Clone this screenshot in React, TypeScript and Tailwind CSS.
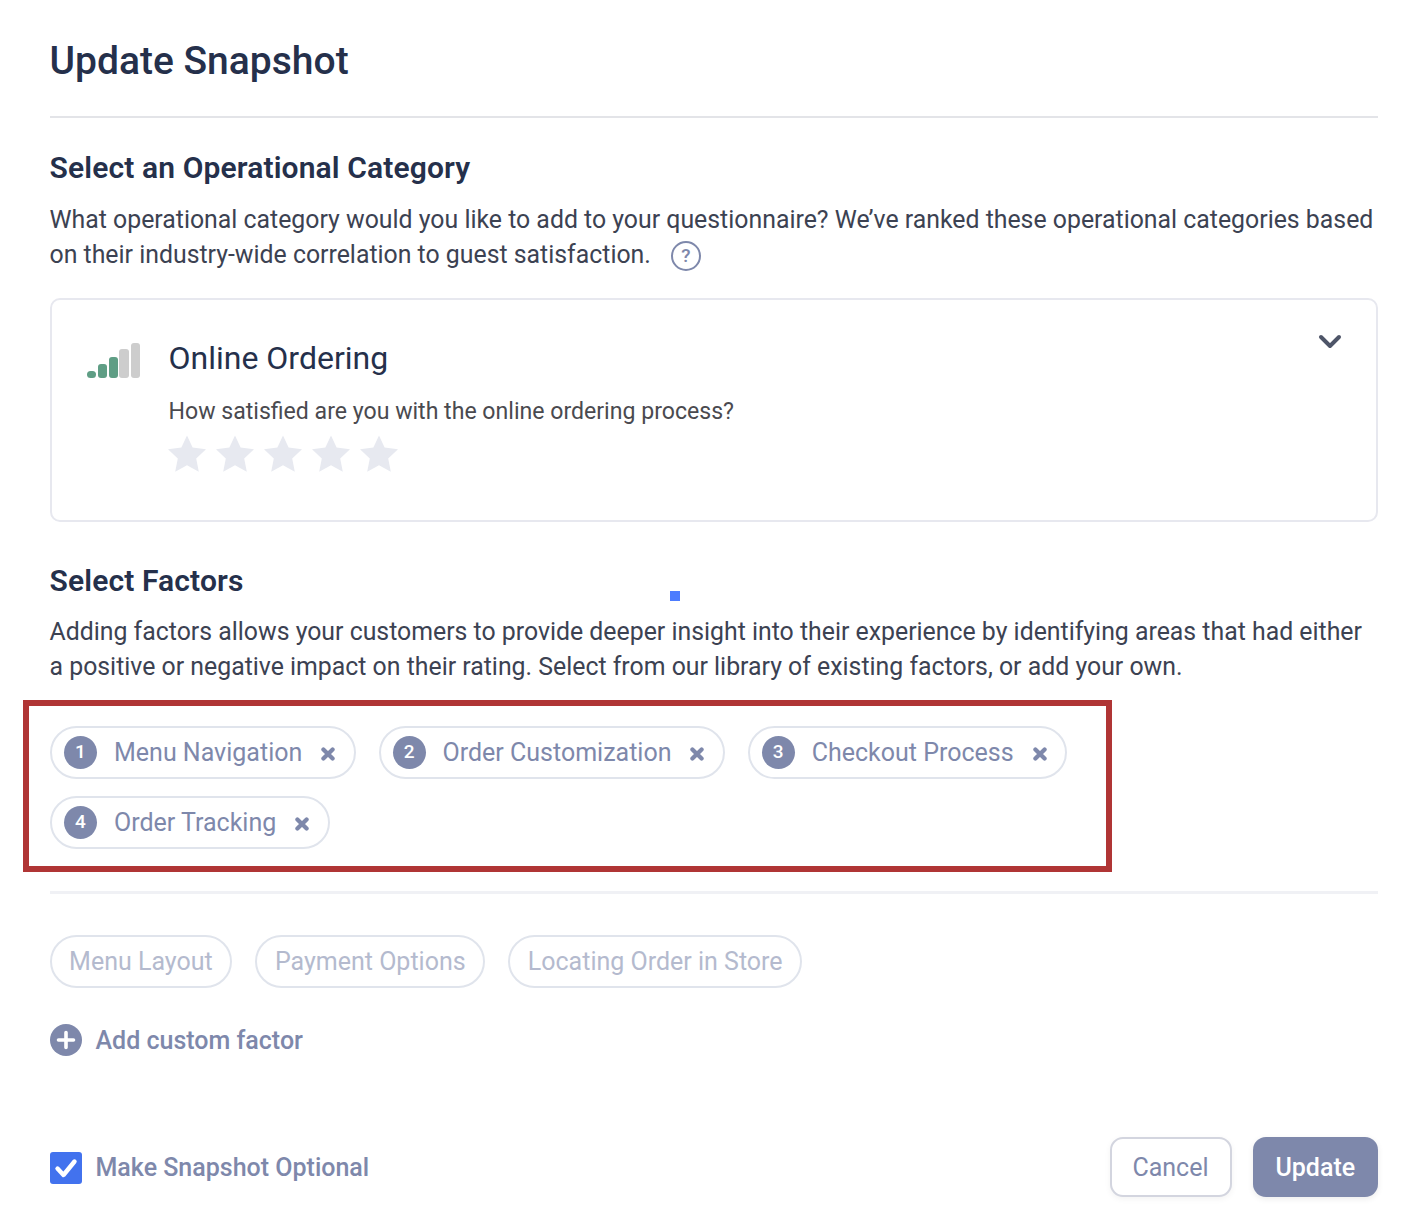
const font = "[font-family:Roboto,'Liberation_Sans',sans-serif]";

function Star() {
  return (
    <svg width="40" height="38" viewBox="0 0 40 38" className="mr-[8px] shrink-0">
      <path d="M20 0.5 L25.6 12.6 L39 14.3 L29.2 23.4 L31.8 36.8 L20 30.2 L8.2 36.8 L10.8 23.4 L1 14.3 L14.4 12.6 Z" fill="#e7e9f0" />
    </svg>
  );
}

function XIcon() {
  return (
    <svg width="14" height="14" viewBox="0 0 14 14" className="mt-[3px] shrink-0">
      <path d="M2.4 2.4 L11.6 11.6 M11.6 2.4 L2.4 11.6" stroke="#7e88ab" strokeWidth="4.2" strokeLinecap="round" />
    </svg>
  );
}

function Chip({ n, label }: { n: number; label: string }) {
  return (
    <div className="flex h-[53px] items-center rounded-full border-2 border-[#e0e4ec] pl-[12px] pr-[18.25px]">
      <span className="flex h-[33px] w-[33px] items-center justify-center rounded-full bg-[#7e88ab] text-[19px] font-medium text-white">{n}</span>
      <span className="ml-[17px] pt-[2px] text-[25px] text-[#7e88ab]">{label}</span>
      <span className="ml-[19px] flex"><XIcon /></span>
    </div>
  );
}

function Option({ label }: { label: string }) {
  return (
    <div className="flex h-[53px] items-center rounded-full border-2 border-[#e0e4ec] px-[17.6px] pt-[2px] text-[25px] text-[#b4bace]">{label}</div>
  );
}

export default function App() {
  return (
    <div className={`${font} relative h-[1228px] w-[1424px] overflow-hidden bg-white pl-[49.5px] pr-[46px] pt-[36px] antialiased`}>
      <h1 className="text-[39px] font-medium leading-[50px] text-[#25304b]">Update Snapshot</h1>
      <div className="mt-[30px] h-[2px] bg-[#e3e4e8]" />

      <h2 className="mt-[32px] text-[30px] font-semibold leading-[36px] tracking-[0.13px] text-[#25304b]">Select an Operational Category</h2>
      <p className="mt-[16px] text-[24.85px] leading-[35px] text-[#3c4252]">
        What operational category would you like to add to your questionnaire? We’ve ranked these operational categories based on their industry-wide correlation to guest satisfaction.
        <span className="ml-[20px] inline-flex h-[30px] w-[30px] -translate-y-[1px] items-center justify-center rounded-full border-2 border-[#7e88ab] text-[19px] font-medium leading-none text-[#7e88ab]">?</span>
      </p>

      <div className="mt-[26px] flex h-[224px] rounded-[10px] border-2 border-[#e7e8ef] pl-[34px] pr-[34px] pt-[28px]">
        <svg width="54" height="36" viewBox="0 0 54 36" className="mt-[15px] shrink-0">
          <rect x="1" y="28" width="9" height="7" rx="3.5" fill="#5f9e85" />
          <rect x="12" y="21" width="9" height="14" rx="3" fill="#5f9e85" />
          <rect x="23" y="14" width="9" height="21" rx="3" fill="#5f9e85" />
          <rect x="33" y="6" width="10" height="29" rx="3" fill="#cdcdcd" />
          <rect x="45" y="0" width="9" height="35" rx="3" fill="#cdcdcd" />
        </svg>
        <div className="ml-[29px] flex-1">
          <div className="text-[32px] leading-[60px] text-[#25304b]">Online Ordering</div>
          <div className="mt-[9px] text-[23.1px] leading-[30px] text-[#4a4a4f]">How satisfied are you with the online ordering process?</div>
          <div className="-ml-[1.5px] mt-[8px] flex">
            <Star /><Star /><Star /><Star /><Star />
          </div>
        </div>
        <svg width="24" height="16" viewBox="0 0 24 16" className="mt-[6px] shrink-0">
          <path d="M3 3 L12 12 L21 3" fill="none" stroke="#4e5568" strokeWidth="4" strokeLinecap="round" strokeLinejoin="round" />
        </svg>
      </div>

      <h2 className="mt-[41px] text-[30px] font-semibold leading-[36px] tracking-[0.13px] text-[#25304b]">Select Factors</h2>
      <p className="mt-[14.5px] text-[24.85px] leading-[35px] text-[#3c4252]">
        Adding factors allows your customers to provide deeper insight into their experience by identifying areas that had either a positive or negative impact on their rating. Select from our library of existing factors, or add your own.
      </p>

      <div className="-ml-[26.5px] mt-[16px] h-[172px] w-[1089px] border-[6px] border-[#b03535] pl-[21px] pr-[21px] pt-[20px]">
        <div className="flex flex-wrap gap-x-[23px] gap-y-[17px]">
          <Chip n={1} label="Menu Navigation" />
          <Chip n={2} label="Order Customization" />
          <Chip n={3} label="Checkout Process" />
          <Chip n={4} label="Order Tracking" />
        </div>
      </div>

      <div className="mt-[19px] h-[3px] bg-[#f0f1f5]" />

      <div className="mt-[41px] flex gap-[23px]">
        <Option label="Menu Layout" />
        <Option label="Payment Options" />
        <Option label="Locating Order in Store" />
      </div>

      <div className="mt-[34px] flex items-center">
        <svg width="32" height="32" viewBox="0 0 32 32" className="shrink-0">
          <circle cx="16" cy="16" r="16" fill="#7e88ab" />
          <path d="M16 8.5 V23.5 M8.5 16 H23.5" stroke="white" strokeWidth="3.6" strokeLinecap="round" />
        </svg>
        <span className="ml-[14px] text-[25px] font-medium text-[#7e88ab]">Add custom factor</span>
      </div>

      <div className="mt-[78px] flex items-center justify-between">
        <div className="mt-[2px] flex items-center">
          <svg width="32" height="32" viewBox="0 0 32 32" className="shrink-0">
            <rect width="32" height="32" rx="3" fill="#4272ee" />
            <path d="M7.5 16.5 L13.5 23 L24.5 9.5" fill="none" stroke="white" strokeWidth="4.4" strokeLinecap="round" strokeLinejoin="round" />
          </svg>
          <span className="ml-[14px] text-[25px] font-medium text-[#7e88ab]">Make Snapshot Optional</span>
        </div>
        <div className="flex gap-[21px]">
          <button className="h-[60px] w-[122px] rounded-[13px] border-2 border-[#d3d5df] bg-white pt-[2px] text-[25px] text-[#7e88ab] shadow-[0_2px_6px_rgba(0,0,0,0.05)]">Cancel</button>
          <button className="h-[60px] w-[125.5px] rounded-[13px] bg-[#7e88ab] pt-[2px] text-[25px] font-medium text-white shadow-[0_2px_6px_rgba(0,0,0,0.08)]">Update</button>
        </div>
      </div>

      <div className="absolute left-[670px] top-[591px] h-[10px] w-[10px] bg-[#4d7cfe]" />
    </div>
  );
}
